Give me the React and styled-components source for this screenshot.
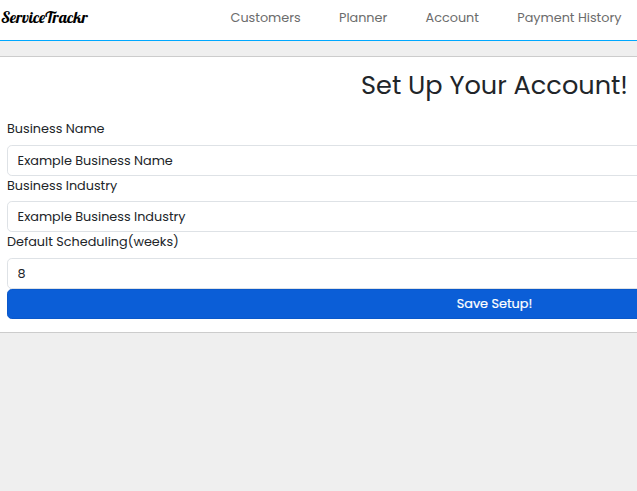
import React from "react";
import styled, { createGlobalStyle } from "styled-components";

const GlobalStyle = createGlobalStyle`
  * { box-sizing: border-box; }
  html, body { margin: 0; }
  body {
    height: 491px;
    overflow: hidden;
    background: #efefef;
    color: #212529;
    font-family: Poppins, Inter, sans-serif;
    font-size: 12.8px;
    line-height: 19.2px;
  }
`;

const Viewport = styled.div`
  width: 100%;
  overflow: hidden;
`;

const Page = styled.div`
  width: 989px;
`;

const Header = styled.header`
  display: flex;
  height: 41px;
  padding-bottom: 5px;
  align-items: center;
  background: #fff;
  border-bottom: 1px solid #00a8ff;
`;

const Brand = styled.div`
  width: 230.5px;
  padding: 0 0 2px 1px;
  color: #000;
  font: 400 16px/24px Lobster, "Liberation Serif", serif;
`;

const Nav = styled.nav`
  display: flex;
  gap: 38.3px;
`;

const NavLink = styled.a`
  color: #6c6c6c;
  white-space: nowrap;
`;

const Card = styled.main`
  height: 277px;
  margin-top: 15px;
  padding: 9px 7px 0;
  background: #fff;
  border: solid #ccc;
  border-width: 1px 0;
`;

const Title = styled.h1`
  margin: 0 0 15.35px;
  font-size: 25.6px;
  line-height: 38px;
  font-weight: 400;
  text-align: center;
`;

const Field = styled.div`
  height: 56.4px;
`;

const Label = styled.label`
  display: block;
  height: 25.65px;
`;

const Input = styled.input`
  display: block;
  width: 100%;
  height: 31px;
  padding: 0.6px 9.6px 0;
  border: 1px solid #dee2e6;
  border-radius: 4.8px;
  background: #fff;
  color: #212529;
  font: inherit;
`;

const SaveButton = styled.button`
  display: block;
  position: relative;
  width: 100%;
  height: 30px;
  padding: 0;
  border: 1px solid #0a58ca;
  border-radius: 4.8px;
  background: #0b5ed7;
  color: #fff;
  font: inherit;
  -webkit-text-stroke: 0.2px #fff;
`;

const links = ["Customers", "Planner", "Account", "Payment History"];

const fields = [
  { label: "Business Name", value: "Example Business Name" },
  { label: "Business Industry", value: "Example Business Industry" },
  { label: "Default Scheduling(weeks)", value: "8" },
];

export default function App() {
  return (
    <Viewport>
      <GlobalStyle />
      <Page>
        <Header>
          <Brand>ServiceTrackr</Brand>
          <Nav>
            {links.map((text) => (
              <NavLink key={text}>{text}</NavLink>
            ))}
          </Nav>
        </Header>
        <Card>
          <Title>Set Up Your Account!</Title>
          {fields.map((f) => (
            <Field key={f.label}>
              <Label>{f.label}</Label>
              <Input defaultValue={f.value} />
            </Field>
          ))}
          <SaveButton>Save Setup!</SaveButton>
        </Card>
      </Page>
    </Viewport>
  );
}
